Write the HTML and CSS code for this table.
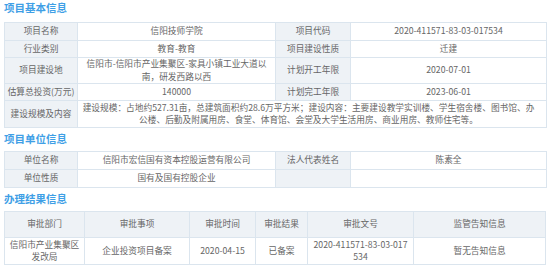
FILE: index.html
```html
<!DOCTYPE html>
<html lang="zh-CN">
<head>
<meta charset="utf-8">
<title>项目信息</title>
<link rel="stylesheet" href="styles.css">
</head>
<body>
<div class="page">
  <h2 class="sec-title first">项目基本信息</h2>
  <table class="info">
    <colgroup><col class="c-l1"><col class="c-v1"><col class="c-l2"><col class="c-v2"></colgroup>
    <tr class="r18"><td class="lbl">项目名称</td><td>信阳技师学院</td><td class="lbl">项目代码</td><td>2020-411571-83-03-017534</td></tr>
    <tr class="r17"><td class="lbl">行业类别</td><td>教育-教育</td><td class="lbl">项目建设性质</td><td>迁建</td></tr>
    <tr class="r26"><td class="lbl">项目建设地</td><td>信阳市-信阳市产业集聚区-家具小镇工业大道以南，研发西路以西</td><td class="lbl">计划开工年限</td><td>2020-07-01</td></tr>
    <tr class="r17"><td class="lbl">估算总投资(万元)</td><td>140000</td><td class="lbl">计划完工年限</td><td>2023-06-01</td></tr>
    <tr class="r27"><td class="lbl">建设规模及内容</td><td colspan="3" class="wide">建设规模：占地约527.31亩，总建筑面积约28.6万平方米；建设内容：主要建设教学实训楼、学生宿舍楼、图书馆、办公楼、后勤及附属用房、食堂、体育馆、会堂及大学生活用房、商业用房、教师住宅等。</td></tr>
  </table>

  <h2 class="sec-title">项目单位信息</h2>
  <table class="info">
    <colgroup><col class="c-l1"><col class="c-v1"><col class="c-l2"><col class="c-v2"></colgroup>
    <tr class="r18"><td class="lbl">单位名称</td><td>信阳市宏信国有资本控股运营有限公司</td><td class="lbl">法人代表姓名</td><td>陈素全</td></tr>
    <tr class="r18"><td class="lbl">单位性质</td><td>国有及国有控股企业</td><td class="lbl"></td><td></td></tr>
  </table>

  <h2 class="sec-title">办理结果信息</h2>
  <table class="info result">
    <colgroup><col class="d1"><col class="d2"><col class="d3"><col class="d4"><col class="d5"><col class="d6"></colgroup>
    <tr class="head"><th>审批部门</th><th>审批事项</th><th>审批时间</th><th>审批结果</th><th>审批文号</th><th>监管告知信息</th></tr>
    <tr class="r27"><td>信阳市产业集聚区发改局</td><td>企业投资项目备案</td><td>2020-04-15</td><td>已备案</td><td class="brk">2020-411571-83-03-017534</td><td>暂无告知信息</td></tr>
  </table>
</div>
</body>
</html>
```

FILE: styles.css
```css
* { box-sizing: border-box; }
html, body { margin: 0; padding: 0; background: #fff; }
body {
  font-family: "Noto Sans CJK SC", "Noto Sans", sans-serif;
  font-size: 8.7px;
  color: #666;
}
.page { padding: 0 4px; width: 550px; }

.sec-title {
  margin: 0;
  padding: 4px 0 5px 0;
  height: 23px;
  line-height: 14px;
  font-size: 10.5px;
  font-weight: bold;
  color: #3f9fe6;
}
.sec-title.first { padding-top: 1px; padding-bottom: 7px; height: 22px; }

.info {
  width: 542px;
  border-collapse: collapse;
  table-layout: fixed;
}
.info td, .info th {
  border: 1px solid #dbe5ee;
  padding: 0 2px;
  line-height: 12.5px;
  text-align: center;
  vertical-align: middle;
  font-weight: normal;
}
.info .lbl { background: #eef2f6; white-space: nowrap; padding: 0; overflow: visible; }
.info .wide { padding: 0 8px 0 1px; }
.c-l1 { width: 73px; }
.c-v1 { width: 198px; }
.c-l2 { width: 75px; }
.c-v2 { width: 196px; }

.r17 { height: 17px; }
.r18 { height: 18px; }
.r26 { height: 26px; }
.r27 { height: 27px; }

.result { width: 541px; }
.result .head { height: 26px; }
.result th { background: #eef2f6; }
.d1 { width: 80px; }
.d2 { width: 105px; }
.d3 { width: 66px; }
.d4 { width: 52px; }
.d5 { width: 106px; }
.d6 { width: 132px; }
.info .brk { word-break: break-all; padding: 0 4px; }
```
